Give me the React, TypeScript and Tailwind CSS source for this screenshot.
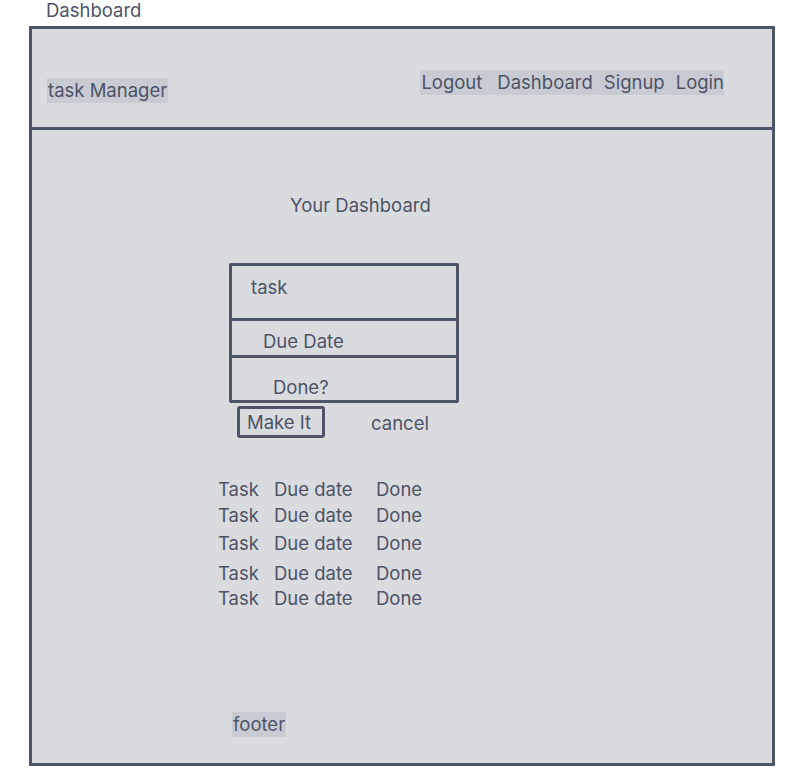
import React from 'react';

const App: React.FC = () => {
  const rows = [
    { id: 1, mt: 'mt-0' },
    { id: 2, mt: 'mt-[2px]' },
    { id: 3, mt: 'mt-[4px]' },
    { id: 4, mt: 'mt-[6px]' },
    { id: 5, mt: 'mt-[1px]' },
  ];

  return (
    <div className="w-[809px] h-[782px] bg-white text-[#4d5366] text-[18.5px] font-['Inter',sans-serif]">
      <div className="pl-[46px] h-[26px]">
        <span className="leading-[20px] block">Dashboard</span>
      </div>

      <div className="ml-[29px] w-[746px] h-[740px] border-[3px] border-[#4f5569] bg-[#dadbdf] flex flex-col">
        {/* header */}
        <div className="h-[101px] border-b-[3px] border-[#4f5569] flex items-start">
          <div className="mt-[49px] ml-[15px] h-[25px] leading-[25px] px-[1px] bg-[#c8cbd3]">task Manager</div>
          <div className="ml-auto mr-[48px] mt-[41px] h-[25px] leading-[25px] bg-[#c8cbd3] flex gap-[11px] pl-[1px]">
            <span className="mr-[4px]">Logout</span>
            <span>Dashboard</span>
            <span>Signup</span>
            <span>Login</span>
          </div>
        </div>

        {/* body */}
        <div className="flex flex-col items-start leading-[24px]">
          <div className="mt-[63px] ml-[258px]">Your Dashboard</div>

          <div className="mt-[46px] ml-[197px] w-[230px] h-[140px] border-[3px] border-[#4f5569] rounded-[2px] flex flex-col">
            <div className="h-[55px] border-b-[3px] border-[#4f5569] pt-[9px] pl-[19px]">task</div>
            <div className="h-[37px] border-b-[3px] border-[#4f5569] pt-[8px] pl-[31px]">Due Date</div>
            <div className="flex-1 pt-[17px] pl-[41px]">Done?</div>
          </div>

          <div className="mt-[3px] ml-[205px] flex items-center">
            <button className="w-[88px] h-[32px] border-[3px] border-[#4f5569] rounded-[3px] pl-[7px] text-left">Make It</button>
            <span className="ml-[46px] mt-[2px]">cancel</span>
          </div>

          <div className="mt-[39px] ml-[186px] flex flex-col">
            {rows.map((r) => (
              <div key={r.id} className={`flex ${r.mt}`}>
                <span className="w-[56px]">Task</span>
                <span className="w-[102px]">Due date</span>
                <span>Done</span>
              </div>
            ))}
          </div>

          <div className="mt-[102px] ml-[200px] h-[25px] leading-[25px] px-[1px] bg-[#c8cbd3]">footer</div>
        </div>
      </div>
    </div>
  );
};

export default App;
